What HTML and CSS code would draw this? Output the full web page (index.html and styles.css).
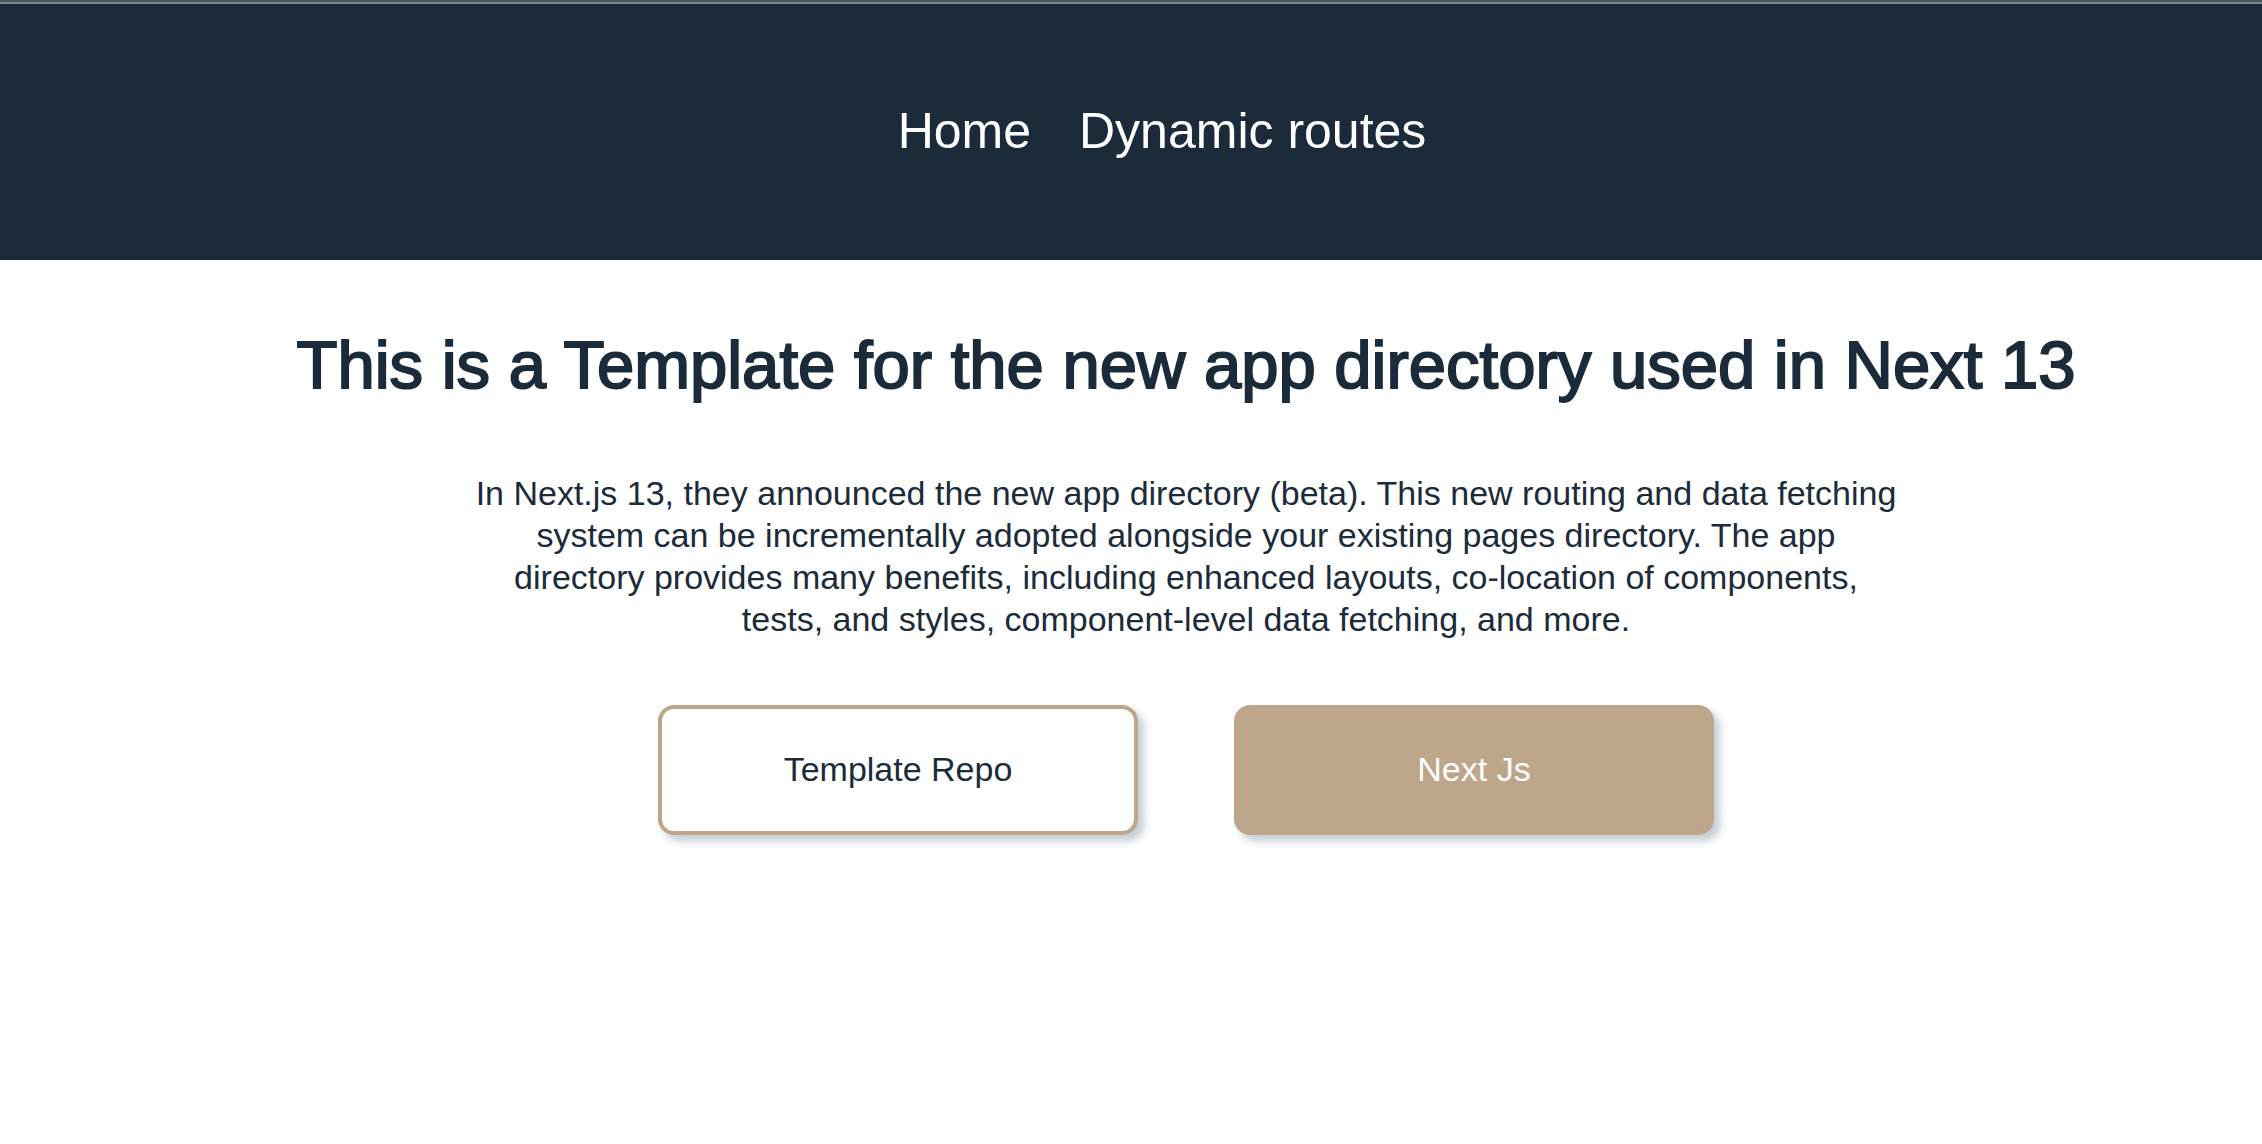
FILE: index.html
```html
<!DOCTYPE html>
<html lang="en">
<head>
<meta charset="utf-8">
<meta name="viewport" content="width=device-width, initial-scale=1">
<title>Next 13 Template</title>
<link rel="stylesheet" href="styles.css">
</head>
<body>
<header class="header">
  <nav class="nav">
    <a class="nav-link" href="#home">Home</a>
    <a class="nav-link" href="#routes">Dynamic routes</a>
  </nav>
</header>
<main class="main">
  <h1 class="title">This is a Template for the new app directory used in Next 13</h1>
  <p class="description">In Next.js 13, they announced the new app directory (beta). This new routing and data fetching system can be incrementally adopted alongside your existing pages directory. The app directory provides many benefits, including enhanced layouts, co-location of components, tests, and styles, component-level data fetching, and more.</p>
  <div class="actions">
    <button class="button" type="button">Template Repo</button>
    <button class="button button-filled" type="button">Next Js</button>
  </div>
</main>
</body>
</html>
```
FILE: styles.css
```css
* {
  box-sizing: border-box;
}

body {
  margin: 0;
  background: #fff;
  color: #1c2b3a;
  font-family: "Liberation Sans", Arial, sans-serif;
}

.header {
  padding: 96px 0 96px 110px;
  border-top: 2px solid #4a5b62;
  background: #1c2b3a;
  box-shadow: inset 0 2px #7b868b;
}

.nav {
  display: flex;
  justify-content: center;
}

.nav-link {
  margin-right: 48px;
  color: #fff;
  font-size: 50px;
  line-height: 66px;
  text-decoration: none;
}

.main {
  display: flex;
  flex-direction: column;
  align-items: center;
  padding: 65px 0 64px 110px;
  text-align: center;
}

.title {
  margin: 0;
  font-size: 67px;
  font-weight: 400;
  line-height: 80px;
  -webkit-text-stroke: 2px #1c2b3a;
}

.description {
  max-width: 1430px;
  margin: 67px 0 65px;
  font-size: 34px;
  line-height: 42px;
}

.actions {
  display: flex;
  gap: 96px;
}

.button {
  width: 480px;
  height: 130px;
  padding: 0 0 2px;
  border: 4px solid #bda68a;
  border-radius: 16px;
  background: #fff;
  box-shadow: 6px 6px 8px #c4cdd3;
  color: #1c2b3a;
  font: inherit;
  font-size: 34px;
}

.button-filled {
  background: #bda68a;
  color: #fff;
}
```
